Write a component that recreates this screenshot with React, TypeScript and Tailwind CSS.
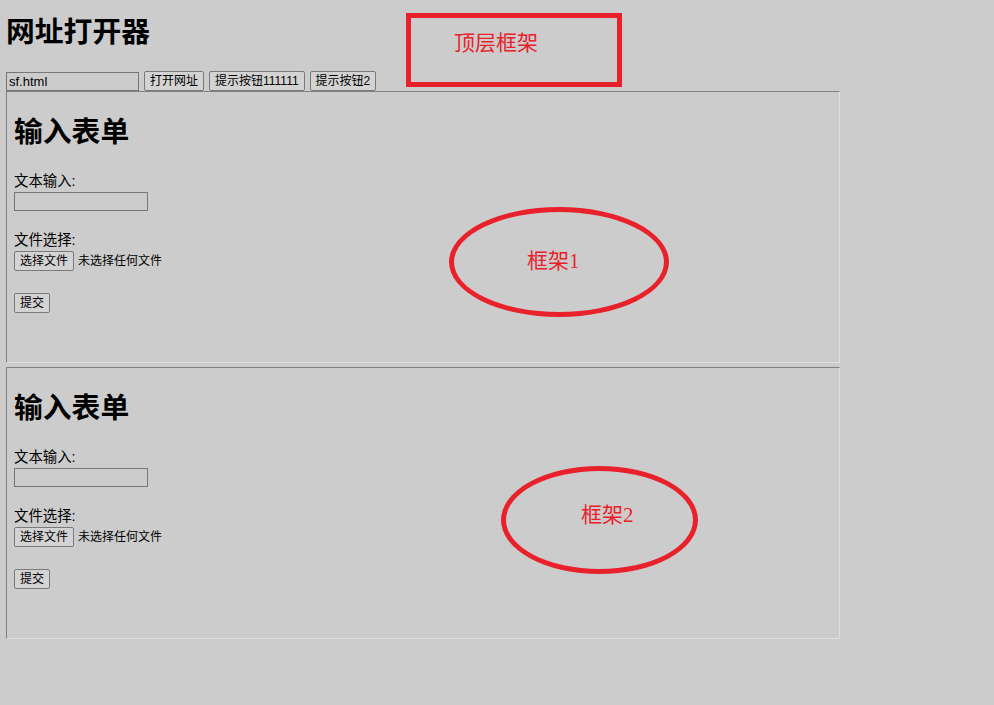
import React from "react";

const btn =
  "h-[20px] px-[5px] bg-[#d3d3d3] border border-[#7a7a7a] rounded-[2px] text-[12px] leading-[18px] text-black";

const note = "absolute text-[21px] leading-[26px] text-[#e8212b]";
const noteFont = { fontFamily: '"Liberation Serif", "Noto Sans CJK SC", serif' };

const FormFrame: React.FC = () => {
  return (
    <div className="w-[834px] h-[272px] border-t border-l border-[#808080] border-r border-b border-r-[#e0e0e0] border-b-[#e0e0e0] pl-[7px] pt-[23px]">
      <h1 className="text-[28.8px] leading-[34px] font-bold">输入表单</h1>
      <div className="mt-[24px] text-[14.4px] leading-[17px]">文本输入:</div>
      <div className="mt-[2px] w-[134px] h-[19px] border border-[#767676]" />
      <div className="mt-[21px] text-[14.4px] leading-[17px]">文件选择:</div>
      <div className="mt-[2px] flex items-center gap-[4px]">
        <button className={btn}>选择文件</button>
        <span className="text-[12px]">未选择任何文件</span>
      </div>
      <div className="mt-[19px]">
        <button className={btn}>提交</button>
      </div>
    </div>
  );
};

const App: React.FC = () => {
  return (
    <div
      className="relative w-[994px] h-[705px] bg-[#cccccc] text-black overflow-hidden"
      style={{ fontFamily: '"Liberation Sans", "Noto Sans CJK SC", sans-serif' }}
    >
      <div className="pl-[6px] pt-[15px]">
        <h1 className="text-[28.8px] leading-[34px] font-bold">网址打开器</h1>
        <div className="mt-[22px] flex items-center gap-[5px]">
          <div className="w-[133px] h-[19px] border border-[#767676] text-[13px] leading-[17px] pl-[2px]">
            sf.html
          </div>
          <button className={btn}>打开网址</button>
          <button className={btn}>提示按钮111111</button>
          <button className={btn}>提示按钮2</button>
        </div>
        <div className="flex flex-col gap-[4px]">
          <FormFrame />
          <FormFrame />
        </div>
      </div>

      {/* annotations */}
      <div className="absolute left-[406px] top-[13px] w-[216px] h-[74px] border-[5px] border-[#e8212b]" />
      <div className={`${note} left-[454px] top-[30px]`} style={noteFont}>
        顶层框架
      </div>
      <div className="absolute left-[449px] top-[207px] w-[220px] h-[110px] rounded-[50%] border-[5px] border-[#e8212b]" />
      <div className={`${note} left-[527px] top-[248px]`} style={noteFont}>
        框架1
      </div>
      <div className="absolute left-[501px] top-[466px] w-[197px] h-[108px] rounded-[50%] border-[5px] border-[#e8212b]" />
      <div className={`${note} left-[581px] top-[502px]`} style={noteFont}>
        框架2
      </div>
    </div>
  );
};

export default App;
